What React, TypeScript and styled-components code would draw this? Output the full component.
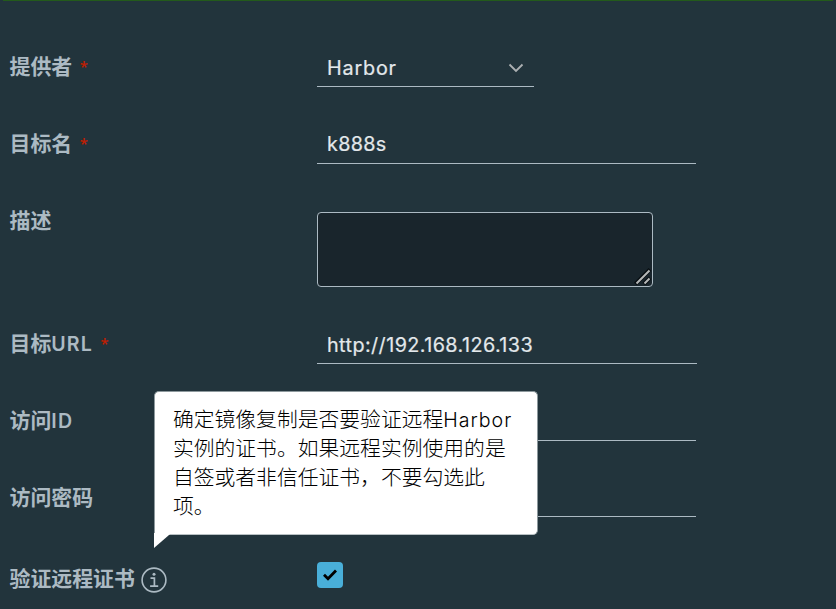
import React from "react";
import styled, { createGlobalStyle } from "styled-components";

const GlobalStyle = createGlobalStyle`
  * { box-sizing: border-box; }
  html, body { margin: 0; background: #22343c; overflow: hidden; }
  body { font-family: "Inter", "Noto Sans CJK SC", sans-serif; }
`;

const Page = styled.main`
  width: 836px;
  height: 609px;
  overflow: hidden;
  background: #22343c;
`;

const TopRule = styled.div`
  height: 1px;
  margin: 0 3px;
  background: #235a1b;
`;

const Form = styled.form`
  padding: 28px 0 0 9.5px;
`;

const Row = styled.div<{ $height?: number }>`
  display: grid;
  grid-template-columns: 307.5px 1fr;
  align-items: start;
  height: ${(p) => p.$height ?? 77}px;
`;

const Label = styled.label<{ $drop?: number }>`
  display: flex;
  align-items: center;
  height: 77px;
  margin-top: ${(p) => p.$drop ?? -3}px;
  color: #acbac3;
  font-family: "Noto Sans CJK SC", sans-serif;
  font-size: 20.9px;
  font-weight: 700;
  line-height: 30px;
  white-space: nowrap;
`;

const Latin = styled.span<{ $spacing?: number }>`
  margin-top: 5px;
  font-family: "Inter", sans-serif;
  font-size: 19.6px;
  font-weight: 600;
  letter-spacing: ${(p) => p.$spacing ?? 0}px;
`;

const Required = styled.span`
  width: 8px;
  margin: 3px 0 0 7.5px;
  color: #c21d00;
  font: 500 15px/30px "Noto Sans", sans-serif;
  text-align: center;
`;

const Field = styled.div<{ $width: number; $height?: number; $spacing?: number; $lift?: number }>`
  display: flex;
  align-items: center;
  justify-content: space-between;
  width: ${(p) => p.$width}px;
  height: 38px;
  margin-top: ${(p) => (p.$height ?? 58) - 38}px;
  padding: 0 10px ${(p) => p.$lift ?? 0}px;
  border-bottom: 1px solid #acbac3;
  color: #e3e8eb;
  font-size: 19.8px;
  font-weight: 400;
  -webkit-text-stroke: 0.2px #e3e8eb;
  letter-spacing: ${(p) => p.$spacing ?? 0}px;
`;

const TextArea = styled.div`
  display: flex;
  align-items: flex-end;
  justify-content: flex-end;
  width: 336px;
  height: 75px;
  margin-top: 29px;
  padding: 0 1px 1px 0;
  border: 1px solid #acbac3;
  border-radius: 4px;
  background: #19252c;
`;

const InfoAnchor = styled.span`
  position: relative;
  display: flex;
  margin: 6px 0 0 6.1px;
`;

const Tooltip = styled.div`
  position: absolute;
  left: 12.8px;
  bottom: 58px;
  width: 384px;
  height: 144px;
  padding: 12px 18.2px;
  border: 1px solid #8d999d;
  border-bottom-color: #b8c0c3;
  border-radius: 5px 5px 5px 0;
  background: #fff;
  color: #000;
  font-size: 20.8px;
  font-weight: 300;
  line-height: 29px;
`;

const TooltipLine = styled.div`
  height: 29px;
`;

const TooltipLatin = styled.span`
  font-family: "Inter", sans-serif;
  font-size: 19.6px;
  line-height: 1;
  letter-spacing: 1px;
`;

const Tail = styled.svg`
  position: absolute;
  left: -1px;
  top: 141px;
`;

const Checkbox = styled.div`
  display: grid;
  place-items: center;
  width: 26px;
  height: 26px;
  margin-top: 25px;
  padding-bottom: 1px;
  border-radius: 4px;
  background: #49afd9;
`;

function Star() {
  return <Required>*</Required>;
}

function InfoIcon() {
  return (
    <svg width="26" height="26" viewBox="0 0 26 26" fill="none" stroke="#acbac3">
      <circle cx="13" cy="13" r="11.9" strokeWidth="1.6" />
      <circle cx="13" cy="7.2" r="1.5" fill="#acbac3" stroke="none" />
      <path d="M9.5 11.2H13.4V19M9.1 19.2H17.2" strokeWidth="1.7" />
    </svg>
  );
}

export default function App() {
  return (
    <Page>
      <GlobalStyle />
      <TopRule />
      <Form>
        <Row>
          <Label>提供者<Star /></Label>
          <Field $width={217} $spacing={0.8}>
            Harbor
            <svg width="16" height="10" viewBox="0 0 16 10" fill="none" stroke="#acb0b2" strokeWidth="1.8">
              <path d="M1.5 1.5 8 8 14.5 1.5" />
            </svg>
          </Field>
        </Row>
        <Row>
          <Label>目标名<Star /></Label>
          <Field $width={379} $spacing={0.3} $lift={2}>k888s</Field>
        </Row>
        <Row $height={123}>
          <Label>描述</Label>
          <TextArea>
            <svg width="17" height="17" viewBox="0 0 17 17" fill="none">
              <path d="M1.5 16 16 1.5M10 16 16 10" stroke="#080e12" strokeWidth="4" />
              <path d="M2.5 15.5 15.5 2.5M10.5 15.5 15.5 10.5" stroke="#b5b8b8" strokeWidth="2" />
            </svg>
          </TextArea>
        </Row>
        <Row>
          <Label>目标<Latin $spacing={1.1}>URL</Latin><Star /></Label>
          <Field $width={380} $spacing={0.42}>http://192.168.126.133</Field>
        </Row>
        <Row>
          <Label>访问<Latin $spacing={1.3}>ID</Latin></Label>
          <Field $width={379} />
        </Row>
        <Row>
          <Label>访问密码</Label>
          <Field $width={379} $height={57} />
        </Row>
        <Row $height={72}>
          <Label $drop={1}>
            验证远程证书
            <InfoAnchor>
              <InfoIcon />
              <Tooltip>
                <TooltipLine>确定镜像复制是否要验证远程<TooltipLatin>Harbor</TooltipLatin></TooltipLine>
                <TooltipLine>实例的证书。如果远程实例使用的是</TooltipLine>
                <TooltipLine>自签或者非信任证书，不要勾选此</TooltipLine>
                <TooltipLine>项。</TooltipLine>
                <Tail width="17" height="16" viewBox="0 0 17 16">
                  <path d="M0 0H17L15 2 0 15Z" fill="#fff" />
                </Tail>
              </Tooltip>
            </InfoAnchor>
          </Label>
          <Checkbox>
            <svg width="16" height="14" viewBox="0 0 16 14" fill="none">
              <path d="M2 6.7 6 10.7 14 2.5" stroke="#000" strokeWidth="2.8" />
            </svg>
          </Checkbox>
        </Row>
      </Form>
    </Page>
  );
}
